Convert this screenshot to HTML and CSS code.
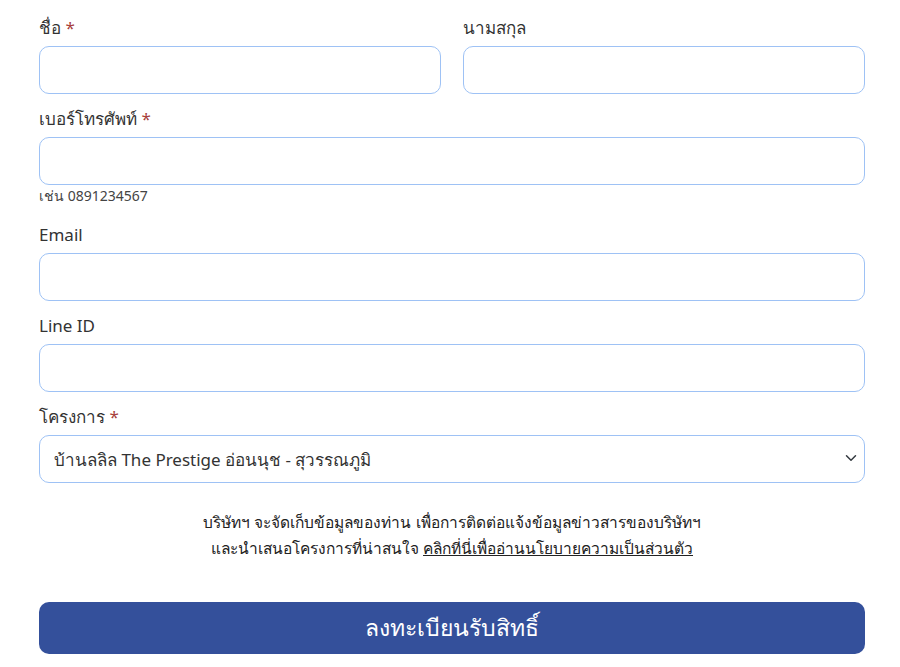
FILE: index.html
```html
<!DOCTYPE html>
<html lang="th">
<head>
  <meta charset="UTF-8">
  <title>ลงทะเบียน</title>
  <link rel="stylesheet" href="styles.css">
</head>
<body>
  <form class="register-form">
    <!-- ชื่อ / นามสกุล -->
    <div class="row">
      <div class="field">
        <label for="fname">ชื่อ <span class="req">*</span></label>
        <input type="text" id="fname">
      </div>
      <div class="field">
        <label for="lname">นามสกุล</label>
        <input type="text" id="lname">
      </div>
    </div>

    <div class="field">
      <label for="phone">เบอร์โทรศัพท์ <span class="req">*</span></label>
      <input type="text" id="phone">
      <small class="help">เช่น 0891234567</small>
    </div>

    <div class="field">
      <label for="email">Email</label>
      <input type="text" id="email">
    </div>

    <div class="field">
      <label for="line">Line ID</label>
      <input type="text" id="line">
    </div>

    <div class="field">
      <label for="project">โครงการ <span class="req">*</span></label>
      <div class="select-wrap">
        <select id="project">
          <option>บ้านลลิล The Prestige อ่อนนุช - สุวรรณภูมิ</option>
        </select>
        <svg class="chevron" width="16" height="16" viewBox="0 0 16 16">
          <path d="M2 5l6 6 6-6" fill="none" stroke="#343a40" stroke-width="2" stroke-linecap="round" stroke-linejoin="round"/>
        </svg>
      </div>
    </div>

    <p class="consent">
      บริษัทฯ จะจัดเก็บข้อมูลของท่าน เพื่อการติดต่อแจ้งข้อมูลข่าวสารของบริษัทฯ<br>
      และนำเสนอโครงการที่น่าสนใจ <a href="#">คลิกที่นี่เพื่ออ่านนโยบายความเป็นส่วนตัว</a>
    </p>

    <button type="button" class="submit-btn">ลงทะเบียนรับสิทธิ์</button>
  </form>
</body>
</html>
```

FILE: styles.css
```css
body {
  font-family: "Noto Sans", "Open Sans", sans-serif;
  margin: 0;
  padding: 0;
  background-color: #fff;
  color: #333;
}

.register-form {
  width: 826px;
  margin-left: 39px;
  padding-top: 16px;
}

.row {
  display: flex;
  gap: 22px;
}

.row .field {
  flex: 1;
}

.field {
  display: flex;
  flex-direction: column;
  margin-bottom: 13px;
}

.field label {
  font-size: 17px;
  line-height: 24px;
  margin-bottom: 6px;
  color: #333;
}

.req {
  color: #a8403c;
}

.field input,
.field select {
  box-sizing: border-box;
  width: 100%;
  height: 48px;
  border: 1px solid #9ec2f5;
  border-radius: 10px;
  background-color: #fff;
  font-family: inherit;
  font-size: 17px;
  color: #333;
  padding: 0 14px;
  outline: none;
}

.help {
  font-size: 14px;
  line-height: 20px;
  color: #444;
  margin-top: 1px;
  margin-bottom: 4px;
}

.select-wrap {
  position: relative;
}

.field select {
  appearance: none;
  -webkit-appearance: none;
  padding-right: 40px;
}

.chevron {
  position: absolute;
  right: 8px;
  top: 17px;
  width: 12px;
  height: 12px;
  pointer-events: none;
}

.consent {
  text-align: center;
  font-size: 15.5px;
  line-height: 26px;
  margin: 26px 0 41px;
  color: #222;
}

.consent a {
  color: #222;
  text-decoration: underline;
}

.submit-btn {
  display: block;
  width: 100%;
  height: 52px;
  border: none;
  border-radius: 10px;
  background-color: #34509b;
  color: #fff;
  font-family: inherit;
  font-size: 23px;
  cursor: pointer;
}
```
